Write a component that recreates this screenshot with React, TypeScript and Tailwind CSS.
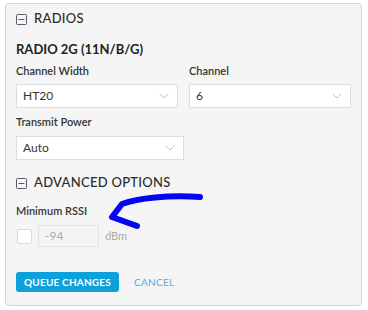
import React from "react";

function MinusBox() {
  return (
    <svg width="11" height="11" viewBox="0 0 11 11" className="shrink-0">
      <rect x="0.5" y="0.5" width="10" height="10" rx="1" fill="none" stroke="#5a5a6a" strokeWidth="1" />
      <line x1="2.5" y1="5.5" x2="8.5" y2="5.5" stroke="#5a5a6a" strokeWidth="1" />
    </svg>
  );
}

function Chevron() {
  return (
    <svg width="10" height="6" viewBox="0 0 10 6" className="shrink-0">
      <polyline points="0.5,0.5 5,5 9.5,0.5" fill="none" stroke="#c4c4c4" strokeWidth="1" />
    </svg>
  );
}

function Select({ value, width }: { value: string; width: string }) {
  return (
    <div
      className={`${width} h-[24px] bg-white border border-[#dcdcdc] flex items-center justify-between pl-[6px] pr-[8px] text-[12px] text-[#333]`}
    >
      <span>{value}</span>
      <Chevron />
    </div>
  );
}

export default function App() {
  return (
    <div className="relative w-[368px] h-[310px] bg-white pt-[3px] pl-[5px] font-['Lato','Liberation_Sans',sans-serif]">
      <div className="w-[357px] h-[303px] border border-[#d4d4d4] rounded-[4px] bg-[#f5f5f5] px-[10px] pt-[1px]">
        {/* radios header */}
        <div className="mt-[4px] h-[20px] flex items-center gap-[7px]">
          <MinusBox />
          <span className="text-[13px] font-medium tracking-[0.3px] text-[#2b2b2b]">RADIOS</span>
        </div>

        <div className="mt-[11px] h-[20px] flex items-center text-[13px] font-bold text-[#222]">
          RADIO 2G (11N/B/G)
        </div>

        <div className="mt-[3px] grid grid-cols-[162px_162px] gap-x-[11px]">
          <div className="h-[16px] flex items-center text-[11px] font-semibold text-[#333]">Channel Width</div>
          <div className="h-[16px] flex items-center text-[11px] font-semibold text-[#333]">Channel</div>
        </div>
        <div className="mt-[5px] grid grid-cols-[162px_162px] gap-x-[11px]">
          <Select value="HT20" width="w-[162px]" />
          <Select value="6" width="w-[162px]" />
        </div>

        <div className="mt-[6px] h-[16px] flex items-center text-[11px] font-semibold text-[#333]">
          Transmit Power
        </div>
        <div className="mt-[6px]">
          <Select value="Auto" width="w-[168px]" />
        </div>

        {/* advanced header */}
        <div className="mt-[13px] h-[20px] flex items-center gap-[7px]">
          <MinusBox />
          <span className="text-[13px] font-medium tracking-[0.3px] text-[#2b2b2b]">ADVANCED OPTIONS</span>
        </div>

        <div className="mt-[10px] h-[16px] flex items-center text-[11px] font-semibold text-[#333]">
          Minimum RSSI
        </div>
        <div className="mt-[6px] h-[22px] flex items-center">
          <div className="ml-[1px] w-[15px] h-[15px] bg-white border border-[#d8d8d8] rounded-[2px]" />
          <div className="ml-[6px] w-[61px] h-[22px] border border-[#e2e2e2] bg-[#f5f5f5] flex items-center pl-[6px] text-[12px] text-[#aaa]">
            -94
          </div>
          <span className="ml-[6px] text-[11px] text-[#aaa]">dBm</span>
        </div>

        <div className="mt-[25px] flex items-center">
          <button className="w-[103px] h-[20px] rounded-[3px] bg-[#0ea0da] text-white text-[10px] font-bold tracking-[0.2px]">
            QUEUE CHANGES
          </button>
          <button className="ml-[15px] h-[20px] text-[10px] text-[#5ea6dd] tracking-[0.3px]">CANCEL</button>
        </div>
      </div>

      {/* hand-drawn annotation arrow */}
      <svg className="absolute left-0 top-0 pointer-events-none" width="368" height="310" viewBox="0 0 368 310">
        <path
          d="M200 197 C168 195 138 198 122 204 L112 217 L137 226"
          fill="none"
          stroke="#0505f2"
          strokeWidth="6"
          strokeLinecap="round"
          strokeLinejoin="round"
        />
      </svg>
    </div>
  );
}
